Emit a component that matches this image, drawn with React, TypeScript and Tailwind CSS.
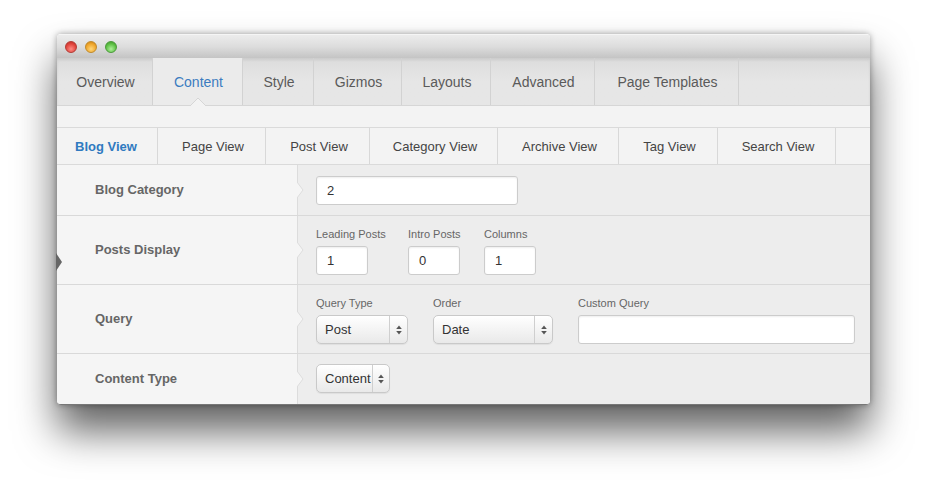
import React from "react";

const font = { fontFamily: '"Liberation Sans", Arial, sans-serif' };

function Arrows() {
  return (
    <svg width="6" height="10" viewBox="0 0 6 10">
      <path d="M3 0.5 L5.8 4 L0.2 4 Z" fill="#555" />
      <path d="M3 9.5 L5.8 6 L0.2 6 Z" fill="#555" />
    </svg>
  );
}

function Select({ label, w, arrowW = 18 }: { label: string; w: string; arrowW?: number }) {
  return (
    <div
      className={`${w} h-[29px] flex items-stretch rounded-[5px] border border-[#c9c9c9] bg-gradient-to-b from-[#ffffff] to-[#e9e9e9] shadow-[inset_0_1px_0_#fff,0_1px_1px_rgba(0,0,0,0.06)]`}
    >
      <div className="flex-1 flex items-center pl-[8px] text-[13px] text-[#333]">{label}</div>
      <div className="border-l border-[#cfcfcf] flex items-center justify-center" style={{ width: arrowW }}>
        <Arrows />
      </div>
    </div>
  );
}

function Input({ w, value, h = "h-[29px]" }: { w: string; value?: string; h?: string }) {
  return (
    <div
      className={`${w} ${h} bg-white border border-[#cccccc] rounded-[3px] shadow-[inset_0_1px_2px_rgba(0,0,0,0.07)] flex items-center pl-[10px] text-[13px] text-[#333]`}
    >
      {value}
    </div>
  );
}

function Row({
  label,
  h,
  children,
  last,
}: {
  label: string;
  h: string;
  children: React.ReactNode;
  last?: boolean;
}) {
  return (
    <div className={`flex ${h} ${last ? "" : "border-b border-[#d9d9d9]"}`}>
      <div className="w-[240px] bg-[#f5f5f5] flex items-center pl-[38px] text-[13px] font-bold text-[#666]">
        {label}
      </div>
      <div className="relative flex-1 bg-[#ededed] border-l border-[#dcdcdc]">
        <svg className="absolute left-[-1px] top-1/2 -translate-y-1/2" width="7" height="16" viewBox="0 0 7 16">
          <path d="M0 0 L6 8 L0 16 Z" fill="#f5f5f5" />
          <path d="M0 0 L6 8 L0 16" fill="none" stroke="#dcdcdc" strokeWidth="1" />
        </svg>
        {children}
      </div>
    </div>
  );
}

function Label({ children }: { children: React.ReactNode }) {
  return <div className="text-[11px] text-[#666] mb-[5px] leading-[13px] whitespace-nowrap">{children}</div>;
}

export default function App() {
  const topTabs = [
    ["Overview", "w-[96px]"],
    ["Content", "w-[90px]"],
    ["Style", "w-[71px]"],
    ["Gizmos", "w-[88px]"],
    ["Layouts", "w-[89px]"],
    ["Advanced", "w-[104px]"],
    ["Page Templates", "w-[144px]"],
  ];
  const subTabs = [
    ["Blog View", "w-[101px]"],
    ["Page View", "w-[108px]"],
    ["Post View", "w-[104px]"],
    ["Category View", "w-[128px]"],
    ["Archive View", "w-[121px]"],
    ["Tag View", "w-[99px]"],
    ["Search View", "w-[118px]"],
  ];
  return (
    <div className="w-[927px] h-[484px] bg-white pl-[57px] pt-[34px] overflow-hidden" style={font}>
      <div className="relative w-[813px] rounded-[4px] overflow-visible shadow-[0_26px_40px_rgba(0,0,0,0.62),0_0_6px_rgba(0,0,0,0.35)]">
        <div className="rounded-[4px] overflow-hidden border-b border-[#777]">
          {/* title bar */}
          <div className="h-[24px] bg-gradient-to-b from-[#ececec] via-[#dddddd] to-[#c4c4c4] flex items-center pl-[8px] gap-[8px] border-t border-[#f5f5f5]">
            <div className="w-[12px] h-[12px] rounded-full bg-[radial-gradient(circle_at_50%_70%,#ff8b85,#e0443c_60%,#b32a25)] border border-[#b33a34]" />
            <div className="w-[12px] h-[12px] rounded-full bg-[radial-gradient(circle_at_50%_70%,#ffd77a,#efa52a_60%,#c07a10)] border border-[#c08a2a]" />
            <div className="w-[12px] h-[12px] rounded-full bg-[radial-gradient(circle_at_50%_70%,#aef09a,#5cbf43_60%,#3b8f28)] border border-[#4b9a3a]" />
          </div>
          {/* top tabs */}
          <div className="h-[48px] flex bg-gradient-to-b from-[#dcdcdc] via-[#e6e6e6] to-[#e6e6e6] border-b border-[#d6d6d6] shadow-[inset_0_2px_3px_rgba(0,0,0,0.08)]">
            {topTabs.map(([t, w], i) => (
              <div
                key={t}
                className={`${w} relative flex items-center justify-center pt-[1px] pl-[2px] text-[14px] border-r border-[#d2d2d2] ${
                  i === 1 ? "text-[#3b7cc0] bg-[#ebebeb]" : "text-[#5a5a5a]"
                }`}
              >
                {t}
                {i === 1 && (
                  <svg className="absolute bottom-[-1px] left-1/2 -translate-x-1/2" width="16" height="8" viewBox="0 0 16 8">
                    <path d="M0 8 L8 0 L16 8 Z" fill="#f3f3f3" />
                    <path d="M0 8 L8 0 L16 8" fill="none" stroke="#d6d6d6" />
                  </svg>
                )}
              </div>
            ))}
          </div>
          <div className="h-[21px] bg-[#f3f3f3]" />
          {/* sub tabs */}
          <div className="h-[38px] flex bg-[#f3f3f3] border-t border-[#dadada] border-b border-[#d6d6d6]">
            {subTabs.map(([t, w], i) => (
              <div
                key={t}
                className={`${w} flex items-center justify-center pt-[1px] text-[13px] border-r border-[#d8d8d8] ${
                  i === 0 ? "text-[#2f7ac0] font-bold pr-[2px]" : "text-[#444] pl-[3px]"
                }`}
              >
                {t}
              </div>
            ))}
          </div>
          {/* rows */}
          <Row label="Blog Category" h="h-[51px]">
            <div className="pl-[18px] pt-[11px]">
              <Input w="w-[202px]" value="2" h="h-[29px]" />
            </div>
          </Row>
          <Row label="Posts Display" h="h-[69px]">
            <div className="pl-[18px] pt-[12px] flex">
              <div className="w-[92px]">
                <Label>Leading Posts</Label>
                <Input w="w-[52px]" value="1" />
              </div>
              <div className="w-[76px]">
                <Label>Intro Posts</Label>
                <Input w="w-[52px]" value="0" />
              </div>
              <div>
                <Label>Columns</Label>
                <Input w="w-[52px]" value="1" />
              </div>
            </div>
          </Row>
          <Row label="Query" h="h-[69px]">
            <div className="pl-[18px] pt-[12px] flex">
              <div>
                <Label>Query Type</Label>
                <Select label="Post" w="w-[92px]" />
              </div>
              <div className="ml-[25px]">
                <Label>Order</Label>
                <Select label="Date" w="w-[120px]" />
              </div>
              <div className="ml-[25px]">
                <Label>Custom Query</Label>
                <Input w="w-[277px]" />
              </div>
            </div>
          </Row>
          <Row label="Content Type" h="h-[50px]" last>
            <div className="pl-[18px] pt-[10px]">
              <Select label="Content" w="w-[74px]" arrowW={17} />
            </div>
          </Row>
        </div>
        {/* left indicator */}
        <svg className="absolute left-[-1px] top-[219px]" width="7" height="18" viewBox="0 0 7 18">
          <path d="M0 0 L6 9 L0 18 Z" fill="#666" />
        </svg>
      </div>
    </div>
  );
}
